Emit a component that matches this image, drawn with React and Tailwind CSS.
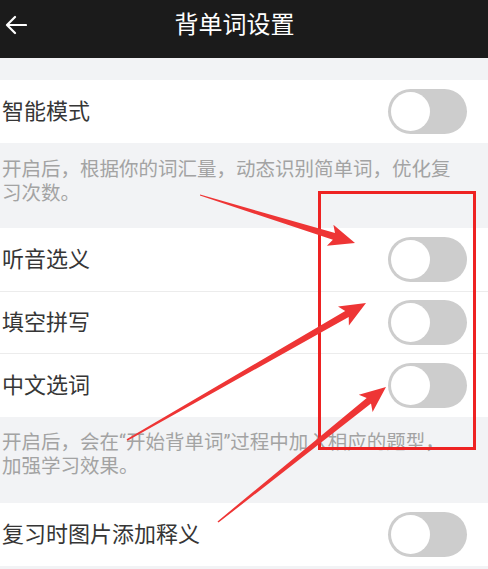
import React from "react";

function arrowPoints(tx, ty, px, py, tw, sw, hl, hw) {
  const dx = px - tx, dy = py - ty;
  const len = Math.hypot(dx, dy);
  const ux = dx / len, uy = dy / len;
  const nx = -uy, ny = ux;
  const bx = px - ux * hl, by = py - uy * hl;
  const cx = bx - ux * 4, cy = by - uy * 4;
  const pts = [
    [tx + nx * tw / 2, ty + ny * tw / 2],
    [bx + nx * sw / 2, by + ny * sw / 2],
    [cx + nx * hw / 2, cy + ny * hw / 2],
    [px, py],
    [cx - nx * hw / 2, cy - ny * hw / 2],
    [bx - nx * sw / 2, by - ny * sw / 2],
    [tx - nx * tw / 2, ty - ny * tw / 2],
  ];
  return pts.map((p) => p[0].toFixed(1) + "," + p[1].toFixed(1)).join(" ");
}

function Toggle() {
  return (
    <div className="w-[79px] h-[45px] rounded-full bg-[#cdcdcd] flex items-center pl-[3px] shrink-0">
      <div className="w-[39px] h-[39px] rounded-full bg-white" />
    </div>
  );
}

function Row({ label, h, border }) {
  return (
    <div
      className={
        "bg-white flex items-center justify-between pl-[2px] pr-[21px] " +
        h +
        (border ? " border-b border-[#ececec]" : "")
      }
    >
      <span className="text-[22px] text-[#363636] leading-none">{label}</span>
      <Toggle />
    </div>
  );
}

export default function App() {
  return (
    <div
      className="relative w-[488px] h-[569px] overflow-hidden bg-[#f2f3f5]"
      style={{ fontFamily: '"Roboto", "Noto Sans CJK SC", sans-serif' }}
    >
      <div className="h-[58px] bg-[#1b1b1b] flex items-center pb-[8px]">
        <div className="pl-[5px] w-[27px] shrink-0 flex items-center">
          <svg width="22" height="20" viewBox="0 0 22 20" fill="none">
            <path d="M21 10H2M10 2L2 10l8 8" stroke="#ffffff" strokeWidth="2.2" strokeLinecap="round" strokeLinejoin="round" />
          </svg>
        </div>
        <div className="flex-1 text-center pr-[46px] text-[24px] text-white leading-none">背单词设置</div>
      </div>
      <div className="h-[22px]" />
      <Row label="智能模式" h="h-[63px]" />
      <div className="pt-[15px] pb-[22px] pl-[2px] pr-[30px] text-[19.5px] leading-[24px] text-[#a3a3a3]">
        开启后，根据你的词汇量，动态识别简单词，优化复习次数。
      </div>
      <Row label="听音选义" h="h-[64px]" border />
      <Row label="填空拼写" h="h-[62px]" border />
      <Row label="中文选词" h="h-[63px]" />
      <div className="pt-[14px] pb-[24px] pl-[2px] pr-[30px] text-[19.5px] leading-[24px] text-[#a3a3a3]">
        开启后，会在“开始背单词”过程中加入相应的题型，加强学习效果。
      </div>
      <Row label="复习时图片添加释义" h="h-[63px]" />

      <svg className="absolute inset-0 pointer-events-none" width="488" height="569" viewBox="0 0 488 569">
        <rect x="319.5" y="192.5" width="155" height="256" fill="none" stroke="#ee2222" strokeWidth="3" />
        <polygon points={arrowPoints(200, 195, 355, 243, 1, 7, 22, 22)} fill="#ee3535" />
        <polygon points={arrowPoints(127, 440, 366, 303, 1.5, 7, 22, 22)} fill="#ee3535" />
        <polygon points={arrowPoints(218, 522, 386, 387, 1.5, 7, 22, 22)} fill="#ee3535" />
      </svg>
    </div>
  );
}
